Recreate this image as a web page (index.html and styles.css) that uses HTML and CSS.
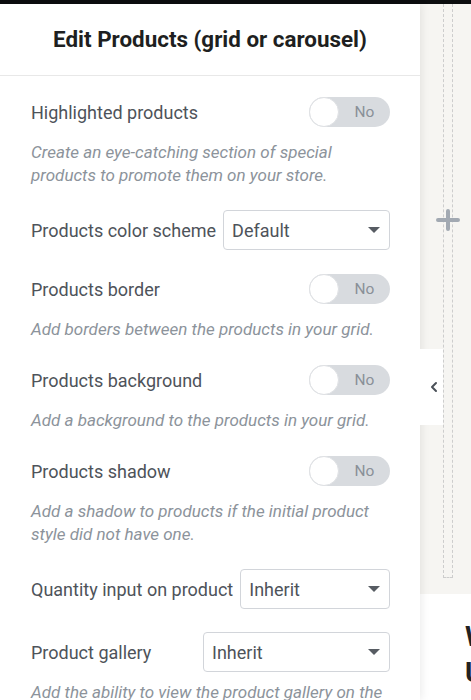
FILE: index.html
```html
<!DOCTYPE html>
<html lang="en">
<head>
<meta charset="utf-8">
<title>Edit Products (grid or carousel)</title>
<link rel="stylesheet" href="styles.css">
</head>
<body>
<div class="app">
  <div class="topbar"></div>
  <div class="workspace">
    <aside class="panel">
      <header class="panel-header">
        <h1 class="panel-title">Edit Products (grid or carousel)</h1>
      </header>
      <div class="panel-body">
        <div class="field">
          <div class="field-row">
            <span class="field-label">Highlighted products</span>
            <span class="switch"><span class="switch-knob"></span><span class="switch-state">No</span></span>
          </div>
          <p class="field-help">Create an eye-catching section of special products to promote them on your store.</p>
        </div>
        <div class="field field--select">
          <div class="field-row">
            <span class="field-label">Products color scheme</span>
            <div class="select">
              <span class="select-value">Default</span>
              <svg class="select-caret" width="12" height="6" viewBox="0 0 12 6"><path d="M0 0h12L6 6z"/></svg>
            </div>
          </div>
        </div>
        <div class="field">
          <div class="field-row">
            <span class="field-label">Products border</span>
            <span class="switch"><span class="switch-knob"></span><span class="switch-state">No</span></span>
          </div>
          <p class="field-help">Add borders between the products in your grid.</p>
        </div>
        <div class="field">
          <div class="field-row">
            <span class="field-label">Products background</span>
            <span class="switch"><span class="switch-knob"></span><span class="switch-state">No</span></span>
          </div>
          <p class="field-help">Add a background to the products in your grid.</p>
        </div>
        <div class="field">
          <div class="field-row">
            <span class="field-label">Products shadow</span>
            <span class="switch"><span class="switch-knob"></span><span class="switch-state">No</span></span>
          </div>
          <p class="field-help">Add a shadow to products if the initial product style did not have one.</p>
        </div>
        <div class="field field--select">
          <div class="field-row">
            <span class="field-label">Quantity input on product</span>
            <div class="select">
              <span class="select-value">Inherit</span>
              <svg class="select-caret" width="12" height="6" viewBox="0 0 12 6"><path d="M0 0h12L6 6z"/></svg>
            </div>
          </div>
        </div>
        <div class="field field--select">
          <div class="field-row">
            <span class="field-label">Product gallery</span>
            <div class="select">
              <span class="select-value">Inherit</span>
              <svg class="select-caret" width="12" height="6" viewBox="0 0 12 6"><path d="M0 0h12L6 6z"/></svg>
            </div>
          </div>
          <p class="field-help">Add the ability to view the product gallery on the product card.</p>
        </div>
      </div>
    </aside>
    <main class="canvas">
      <div class="stage">
        <div class="dropzone">
          <svg class="dropzone-add" width="24" height="22" viewBox="0 0 24 22"><path d="M2 11h20M12 2v18"/></svg>
        </div>
      </div>
      <section class="page-section">
        <h2 class="page-heading">Why Us</h2>
      </section>
      <button class="collapse" type="button" aria-label="Collapse panel">
        <svg width="8" height="12" viewBox="0 0 8 12"><path d="M6 2L2 6l4 4"/></svg>
      </button>
    </main>
  </div>
</div>
</body>
</html>
```

FILE: styles.css
```css
* {
  box-sizing: border-box;
}

html,
body {
  margin: 0;
  height: 100%;
  overflow: hidden;
}

body {
  font-family: Roboto, "Liberation Sans", sans-serif;
  background: #ffffff;
}

.app {
  display: flex;
  flex-direction: column;
  height: 100%;
}

.topbar {
  flex: none;
  height: 4px;
  background: #0c0d0f;
}

.workspace {
  flex: 1;
  display: flex;
  min-height: 0;
}

/* Settings panel */
.panel {
  position: relative;
  z-index: 2;
  flex: none;
  width: 420px;
  background: #ffffff;
  box-shadow: 1px 0 9px rgba(0, 0, 0, 0.09);
  overflow: hidden;
}

.panel-header {
  height: 72px;
  display: flex;
  align-items: center;
  justify-content: center;
  padding-bottom: 2px;
  border-bottom: 1px solid #e8e8e8;
}

.panel-title {
  margin: 0;
  font-size: 22.4px;
  font-weight: 700;
  color: #1e1f21;
}

.panel-body {
  padding: 16px 30px 0 31px;
  display: flex;
  flex-direction: column;
  gap: 19px;
}

.field--select {
  padding-top: 4px;
}

.field-row {
  display: flex;
  align-items: center;
  gap: 7px;
  min-height: 40px;
}

.field-label {
  flex: none;
  font-size: 18px;
  color: #4e535a;
}

.field-help {
  margin: 9px 0 0;
  font-size: 17px;
  line-height: 23px;
  font-style: italic;
  color: #8c939b;
}

/* Yes/No switch */
.switch {
  margin-left: auto;
  flex: none;
  display: flex;
  align-items: center;
  width: 81px;
  height: 30px;
  border-radius: 15px;
  background: #d8dbdf;
}

.switch-knob {
  width: 30px;
  height: 30px;
  border-radius: 50%;
  background: #ffffff;
  border: 1px solid #dfe1e4;
}

.switch-state {
  flex: 1;
  text-align: center;
  font-size: 15.5px;
  color: #8a9098;
}

/* Dropdown */
.select {
  margin-left: auto;
  flex: 0 1 187px;
  min-width: 0;
  height: 40px;
  display: flex;
  align-items: center;
  justify-content: space-between;
  padding: 0 9px 0 8px;
  border: 1px solid #d2d5da;
  border-radius: 4px;
  background: #ffffff;
}

.select-value {
  font-size: 18px;
  color: #4e535a;
}

.select-caret {
  fill: #575c63;
}

/* Page preview */
.canvas {
  position: relative;
  flex: 1;
  min-width: 0;
  display: flex;
  flex-direction: column;
  overflow: hidden;
}

.stage {
  flex: none;
  height: 590px;
  padding: 0 0 16px 23px;
  background: #f6f5f2;
}

.dropzone {
  position: relative;
  width: 10px;
  height: 100%;
  border: 1px dashed #cdcdcd;
  border-top: 0;
}

.dropzone-add {
  position: absolute;
  left: 50%;
  top: 205px;
  margin-left: -12px;
  fill: none;
  stroke: #a2a9b2;
  stroke-width: 4;
  stroke-linecap: round;
}

.page-section {
  flex: 1;
  padding: 25px 0 0 45px;
  background: #ffffff;
}

.page-heading {
  margin: 0;
  width: 0;
  font-size: 28px;
  line-height: 36px;
  font-weight: 700;
  color: #222222;
}

.collapse {
  position: absolute;
  z-index: 3;
  left: 0;
  top: 345px;
  width: 23px;
  height: 76px;
  padding: 0 0 0 4px;
  display: flex;
  align-items: center;
  justify-content: center;
  border: 0;
  background: #ffffff;
}

.collapse svg {
  fill: none;
  stroke: #4a5058;
  stroke-width: 2;
  stroke-linecap: round;
  stroke-linejoin: round;
}
```
